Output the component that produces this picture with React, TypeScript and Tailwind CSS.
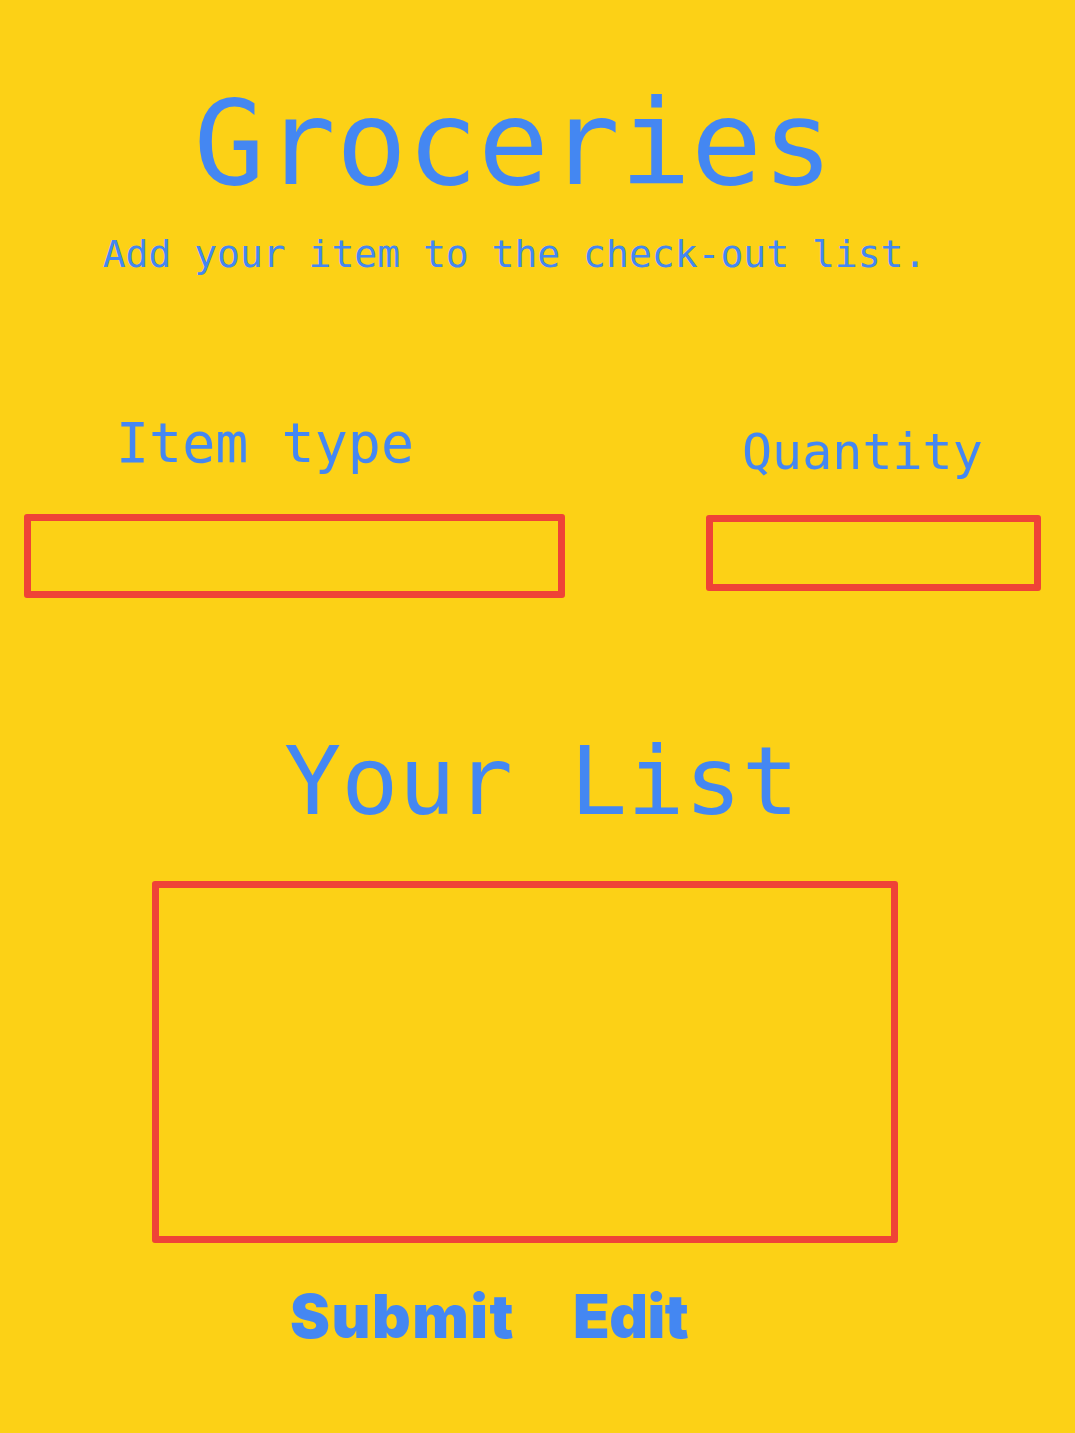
export default function App() {
  return (
    <div className="min-h-[1433px] w-full bg-[#fcd116] font-['DejaVu_Sans_Mono',monospace] text-[#4487f2]">
      {/* Header */}
      <h1 className="pt-[84px] pr-[48px] text-center text-[118px] leading-none font-normal">Groceries</h1>
      <p className="mt-[33px] pr-[46px] text-center text-[38px] leading-none">Add your item to the check-out list.</p>

      {/* Inputs */}
      <div className="mt-[143px] flex items-start">
        <div className="flex flex-col pl-[24px]">
          <label className="ml-[92px] text-[55px] leading-none">Item type</label>
          <input
            type="text"
            className="mt-[43px] h-[84px] w-[541px] rounded-[3px] border-[7px] border-[#ef4337] bg-transparent outline-none"
          />
        </div>
        <div className="ml-[141px] mt-[11px] flex flex-col">
          <label className="ml-[36px] text-[50px] leading-none">Quantity</label>
          <input
            type="text"
            className="mt-[38px] h-[76px] w-[335px] rounded-[3px] border-[7px] border-[#ef4337] bg-transparent outline-none"
          />
        </div>
      </div>

      {/* List */}
      <h2 className="mt-[136px] pl-[8px] text-center text-[95px] leading-none font-normal">Your List</h2>
      <div className="ml-[152px] mt-[52px] h-[362px] w-[746px] rounded-[3px] border-[7px] border-[#ef4337]" />

      {/* Actions */}
      <div className="ml-[290px] mt-[43px] flex font-['Inter',sans-serif] text-[60px] font-black leading-none">
        <button className="w-[283px] text-left tracking-[1.5px]">Submit</button>
        <button className="text-left tracking-[-0.5px]">Edit</button>
      </div>
    </div>
  );
}
